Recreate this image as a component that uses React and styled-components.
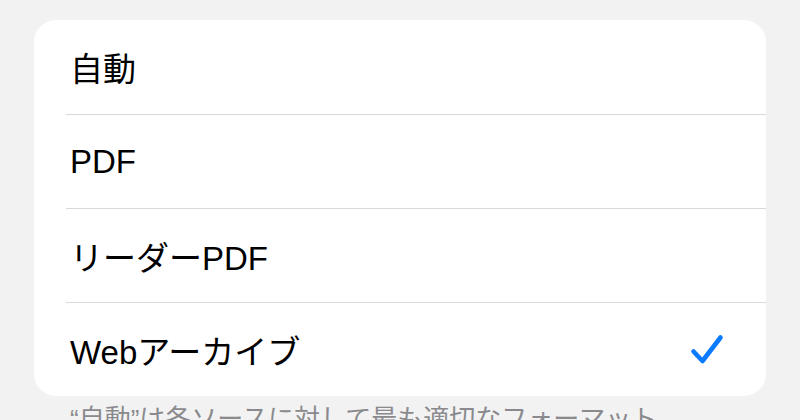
import styled, { createGlobalStyle } from "styled-components";

const GlobalStyle = createGlobalStyle`
  html, body {
    margin: 0;
    padding: 0;
    background: #f2f2f2;
    overflow: hidden;
  }
  body {
    font-family: "Liberation Sans", "Noto Sans CJK JP", sans-serif;
    -webkit-font-smoothing: antialiased;
  }
`;

const options = ["自動", "PDF", "リーダーPDF", "Webアーカイブ"];

const Check = () => (
  <svg width="34" height="32" viewBox="0 0 34 32" fill="none">
    <path
      d="M3.5 17.5 L12.5 27 L30.5 3.5"
      stroke="#0a7aff"
      strokeWidth="4.6"
      strokeLinecap="round"
      strokeLinejoin="round"
    />
  </svg>
);

export default function App() {
  const selected = "Webアーカイブ";

  return (
    <>
      <GlobalStyle />
      <Page>
        <Card>
          {options.map((o, i) => (
            <Row key={o} first={i === 0}>
              <Label>{o}</Label>
              {o === selected && <Check />}
            </Row>
          ))}
        </Card>
        <Footnote>“自動”は各ソースに対して最も適切なフォーマットを選択します。</Footnote>
      </Page>
    </>
  );
}

/* ---------------------------- Styled Components --------------------------- */

const Page = styled.div`
  width: 800px;
  height: 420px;
  overflow: hidden;
  box-sizing: border-box;
  padding: 20px 34px 0;
  display: flex;
  flex-direction: column;
`;

const Card = styled.div`
  flex-shrink: 0;
  background: #ffffff;
  border-radius: 22px;
  display: flex;
  flex-direction: column;
  overflow: hidden;
`;

const Row = styled.div`
  flex-shrink: 0;
  height: 94px;
  margin-left: 32px;
  padding: 0 42px 0 4px;
  display: flex;
  align-items: center;
  justify-content: space-between;
  border-top: ${props => (props.first ? "none" : "1px solid #d9d9d9")};
  box-sizing: border-box;
`;

const Label = styled.span`
  font-size: 33px;
  color: #000;
`;

const Footnote = styled.div`
  flex-shrink: 0;
  margin-top: 6px;
  padding-left: 36px;
  max-width: 590px;
  font-size: 26px;
  line-height: 34px;
  color: #8a8a8e;
`;
